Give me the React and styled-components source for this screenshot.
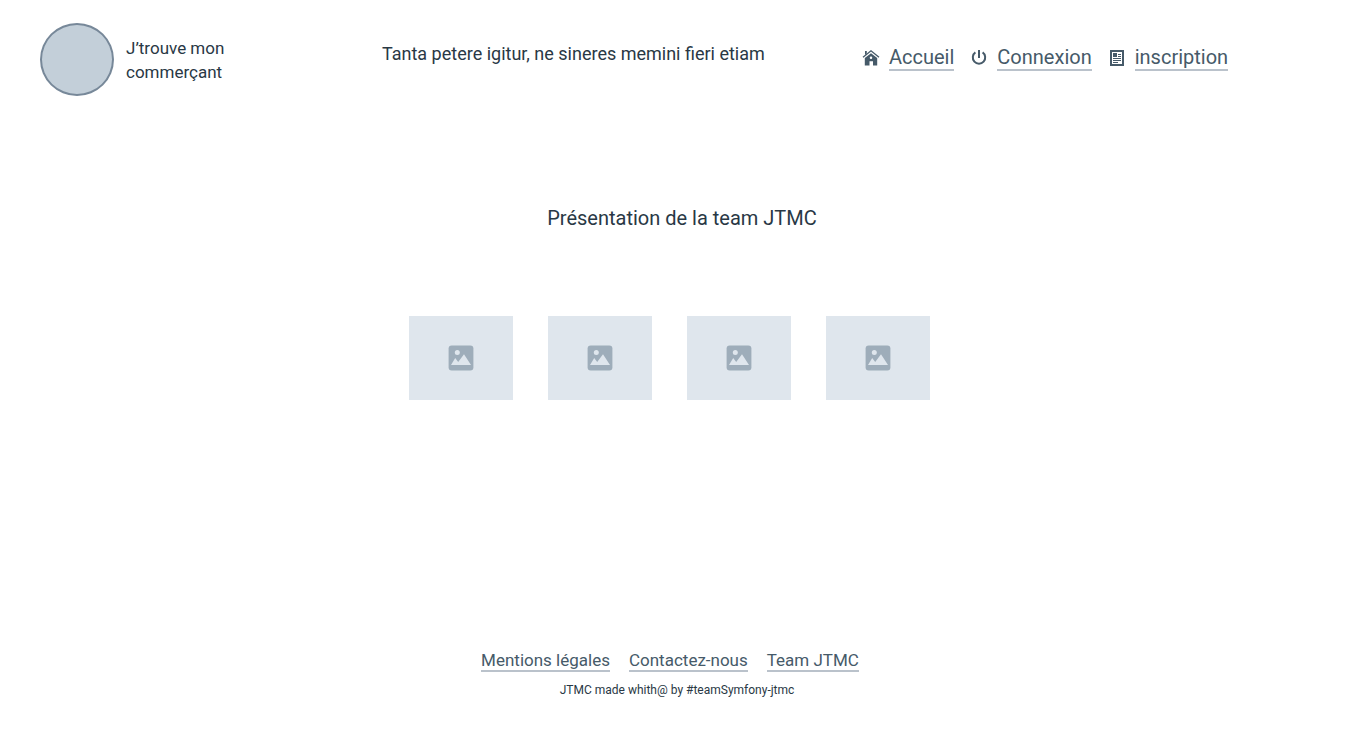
import React from "react";
import styled, { createGlobalStyle } from "styled-components";

const Global = createGlobalStyle`
  * { box-sizing: border-box; }
  body {
    margin: 0;
    background: #fff;
    color: #293845;
    font-family: Roboto, "Liberation Sans", sans-serif;
  }
`;

const Page = styled.div`
  min-height: 100vh;
  display: flex;
  flex-direction: column;
`;

const Header = styled.header`
  display: grid;
  grid-template-columns: 342fr 480fr 502fr;
  align-items: start;
  padding: 23px 0 0 40px;
`;

const Brand = styled.div`
  display: flex;
  align-items: center;
  gap: 12px;
`;

const Avatar = styled.div`
  width: 74px;
  height: 73px;
  flex: none;
  border: 2px solid #778899;
  border-radius: 50%;
  background: #c3cfd9;
`;

const BrandName = styled.p`
  width: 112px;
  margin: 0;
  font-size: 17px;
  line-height: 24px;
`;

const Tagline = styled.p`
  margin: 0;
  padding-top: 19px;
  font-size: 18px;
  line-height: 24px;
  white-space: nowrap;
`;

const Nav = styled.nav`
  display: flex;
  gap: 16px;
  padding-top: 22px;
`;

const NavItem = styled.div`
  display: flex;
  align-items: center;
  gap: 9px;
  color: #465a69;
`;

const Link = styled.a`
  color: #465a69;
  text-decoration: none;
  white-space: nowrap;
  border-bottom: 2px solid #bac2cb;
  font-size: ${(p) => (p.$large ? 20 : 17)}px;
  line-height: ${(p) => (p.$large ? 24 : 20)}px;
`;

const Icon = styled.svg`
  width: 18px;
  height: 18px;
  flex: none;
`;

const Main = styled.main`
  flex: 1;
  display: flex;
  flex-direction: column;
  align-items: center;
  padding-top: 108px;
`;

const Title = styled.h1`
  margin: 0;
  font-size: 20px;
  font-weight: 400;
  line-height: 28px;
`;

const Team = styled.div`
  display: flex;
  gap: 35px;
  margin: 84px 25px 0 0;
`;

const Photo = styled.div`
  display: flex;
  align-items: center;
  justify-content: center;
  width: 104px;
  height: 84px;
  background: #dfe6ed;
`;

const Footer = styled.footer`
  display: flex;
  flex-direction: column;
  align-items: center;
  padding: 0 24px 34px 0;
`;

const FooterLinks = styled.nav`
  display: flex;
  gap: 19px;
`;

const Credit = styled.p`
  margin: 0;
  padding: 10px 0 0 14px;
  font-size: 12px;
  line-height: 16px;
`;

const HomeIcon = () => (
  <Icon viewBox="0 0 18 18" aria-hidden="true">
    <path d="M1 8.2 9 1.8l8 6.4" fill="none" stroke="#465a69" strokeWidth="1.4" />
    <path d="M3 2h1.8v2.5L3 6z" fill="#465a69" />
    <path d="M2.8 9 9 4.2 15.2 9v7.4H11v-4.2H7.5v4.2H2.8z" fill="#465a69" />
    <rect x="7.8" y="7.6" width="2.4" height="2.4" rx="1" fill="#fff" />
  </Icon>
);

const PowerIcon = () => (
  <Icon viewBox="0 0 18 18" aria-hidden="true" fill="none" stroke="#465a69" strokeWidth="2">
    <path d="M9 1v8M5.4 3.4a6.2 6.2 0 1 0 7.2 0" />
  </Icon>
);

const NewsIcon = () => (
  <Icon viewBox="0 0 18 18" aria-hidden="true">
    <rect x="3" y="2" width="12" height="14" fill="none" stroke="#465a69" strokeWidth="2" />
    <path d="M5 4h4v4H5z" fill="#465a69" />
    <path d="M10 5.5h3M10 7.5h3M5 9.5h8M5 11.5h8M5 13.5h5" stroke="#465a69" />
  </Icon>
);

const PictureIcon = () => (
  <svg width="26" height="26" viewBox="0 0 26 26" aria-hidden="true">
    <rect x="0.6" y="0.6" width="24.8" height="24.8" rx="3" fill="#9eadba" />
    <circle cx="9.3" cy="7.5" r="2.5" fill="#dfe6ed" />
    <path d="M3 20 7.2 13l3 4L16 9.3 23 20z" fill="#dfe6ed" />
  </svg>
);

const navigation = [
  { label: "Accueil", Glyph: HomeIcon },
  { label: "Connexion", Glyph: PowerIcon },
  { label: "inscription", Glyph: NewsIcon },
];

export default function App() {
  return (
    <Page>
      <Global />
      <Header>
        <Brand>
          <Avatar />
          <BrandName>J’trouve mon commerçant</BrandName>
        </Brand>
        <Tagline>Tanta petere igitur, ne sineres memini fieri etiam</Tagline>
        <Nav>
          {navigation.map(({ label, Glyph }) => (
            <NavItem key={label}>
              <Glyph />
              <Link href="#" $large>{label}</Link>
            </NavItem>
          ))}
        </Nav>
      </Header>
      <Main>
        <Title>Présentation de la team JTMC</Title>
        <Team>
          {[1, 2, 3, 4].map((n) => (
            <Photo key={n}><PictureIcon /></Photo>
          ))}
        </Team>
      </Main>
      <Footer>
        <FooterLinks>
          <Link href="#">Mentions légales</Link>
          <Link href="#">Contactez-nous</Link>
          <Link href="#">Team JTMC</Link>
        </FooterLinks>
        <Credit>JTMC made whith@ by #teamSymfony-jtmc</Credit>
      </Footer>
    </Page>
  );
}
